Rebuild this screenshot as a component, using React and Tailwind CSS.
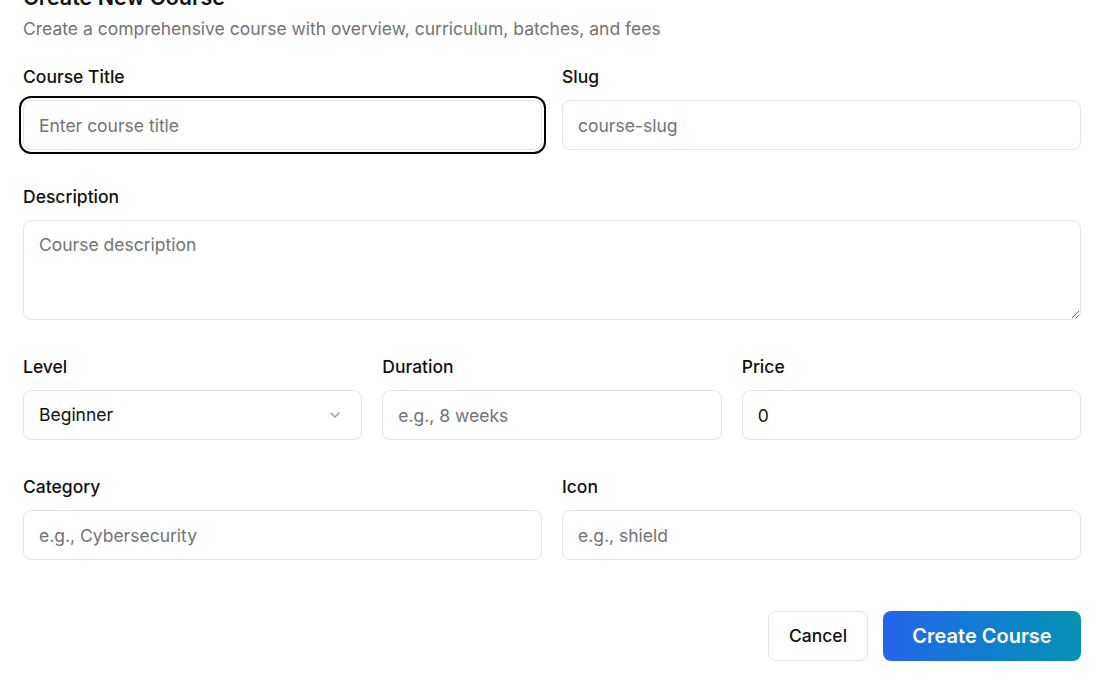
import React from "react";
import { ChevronDown } from "lucide-react";

const inputCls =
  "h-[50px] w-full rounded-lg border border-[#e5e5e5] bg-white px-[15px] text-[17.5px] text-[#111] placeholder:text-[#737373] outline-none";

function Field({ label, children }) {
  return (
    <div className="flex flex-col gap-[11px]">
      <label className="text-[17.5px] leading-6 font-medium text-[#111]">{label}</label>
      {children}
    </div>
  );
}

export default function App() {
  return (
    <div
      className="min-h-[685px] bg-white pl-[23px] pr-[24px] text-[#111]"
      style={{ fontFamily: "Inter, 'Noto Sans', sans-serif" }}
    >
      <div className="-mt-[19px]">
        <h2 className="text-[21.5px] leading-8 font-semibold text-[#111]">Create New Course</h2>
        <p className="mt-[4px] text-[17.5px] leading-6 text-[#737373]">
          Create a comprehensive course with overview, curriculum, batches, and fees
        </p>
      </div>

      <div className="mt-[24px] flex flex-col gap-[35px]">
        <div className="grid grid-cols-2 gap-5">
          <Field label="Course Title">
            <input
              className={inputCls + " shadow-[0_0_0_2px_#fff,0_0_0_4px_#000]"}
              placeholder="Enter course title"
            />
          </Field>
          <Field label="Slug">
            <input className={inputCls} placeholder="course-slug" />
          </Field>
        </div>

        <Field label="Description">
          <textarea
            className="h-[100px] w-full rounded-lg border border-[#e5e5e5] bg-white px-[15px] py-[11px] text-[17.5px] text-[#111] placeholder:text-[#737373] outline-none"
            placeholder="Course description"
          />
        </Field>

        <div className="grid grid-cols-3 gap-5">
          <Field label="Level">
            <div className="flex h-[50px] w-full items-center justify-between rounded-lg border border-[#e5e5e5] bg-white pl-[15px] pr-[18px] text-[17.5px]">
              <span>Beginner</span>
              <ChevronDown className="h-4 w-4 text-[#9a9a9a]" strokeWidth={2} />
            </div>
          </Field>
          <Field label="Duration">
            <input className={inputCls} placeholder="e.g., 8 weeks" />
          </Field>
          <Field label="Price">
            <input className={inputCls} defaultValue="0" />
          </Field>
        </div>

        <div className="grid grid-cols-2 gap-5">
          <Field label="Category">
            <input className={inputCls} placeholder="e.g., Cybersecurity" />
          </Field>
          <Field label="Icon">
            <input className={inputCls} placeholder="e.g., shield" />
          </Field>
        </div>
      </div>

      <div className="mt-[51px] flex justify-end gap-[15px]">
        <button className="h-[50px] w-[100px] rounded-lg border border-[#e5e5e5] bg-white text-[17.5px] font-medium text-[#111]">
          Cancel
        </button>
        <button className="h-[50px] w-[198px] rounded-lg bg-gradient-to-r from-[#2563eb] to-[#0891b2] text-xl font-semibold text-white">
          Create Course
        </button>
      </div>
    </div>
  );
}
